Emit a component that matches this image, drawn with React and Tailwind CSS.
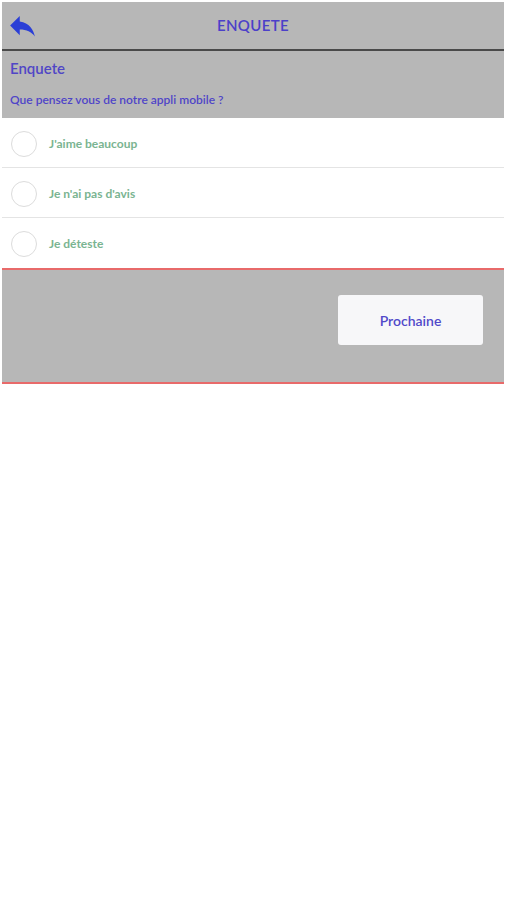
import React, { useState } from "react";

const options = ["J'aime beaucoup", "Je n'ai pas d'avis", "Je déteste"];

export default function App() {
    const [choice, setChoice] = useState(null);

    return (
        <div className="min-h-[900px] bg-white pt-[2px] pl-[2px] pr-[3px] font-['Lato',sans-serif]">
            {/* header */}
            <div className="h-[47px] bg-[#b7b7b7] flex items-center relative">
                <button className="absolute left-[4px] top-[7px] text-[#2b3fd6]">
                    <svg width="33" height="33" viewBox="0 0 24 24" fill="currentColor">
                        <path d="M10 9V5l-7 7 7 7v-4.1c5 0 8.5 1.6 11 5.1-1-5-4-10-11-11z" />
                    </svg>
                </button>
                <h1 className="w-full text-center text-[15px] font-semibold text-[#4b40c9] tracking-wide">ENQUETE</h1>
            </div>
            <div className="h-[2px] bg-[#4a4a4a]"></div>

            <div className="h-[67px] bg-[#b7b7b7] px-[8px] pt-[8px]">
                <p className="text-[15px] font-semibold text-[#5046c6] leading-[18px]">Enquete</p>
                <p className="mt-[14px] text-[12px] font-semibold text-[#4f45c8]">Que pensez vous de notre appli mobile ?</p>
            </div>

            {/* options */}
            <div>
                {options.map((opt, i) => (
                    <label
                        key={opt}
                        className={`h-[50px] flex items-center gap-[12px] px-[9px] pt-[2px] cursor-pointer ${i < options.length - 1 ? "border-b border-[#e4e4e4]" : ""}`}
                    >
                        <input
                            type="radio"
                            name="enquete"
                            checked={choice === i}
                            onChange={() => setChoice(i)}
                            className="hidden"
                        />
                        <span className="w-[26px] h-[26px] rounded-full border border-[#dcdcdc] flex items-center justify-center">
                            {choice === i && <span className="w-[14px] h-[14px] rounded-full bg-[#78b48f]"></span>}
                        </span>
                        <span className="text-[12px] font-bold text-[#7ab491]">{opt}</span>
                    </label>
                ))}
            </div>

            {/* footer */}
            <div className="border-t-2 border-b-2 border-[#e86a6a] bg-[#b7b7b7] h-[116px] flex justify-end pt-[25px] pr-[21px]">
                <button className="w-[145px] h-[50px] bg-[#f7f7f9] rounded-[3px] text-[14px] font-semibold text-[#5149c9]">
                    Prochaine
                </button>
            </div>
        </div>
    );
}
